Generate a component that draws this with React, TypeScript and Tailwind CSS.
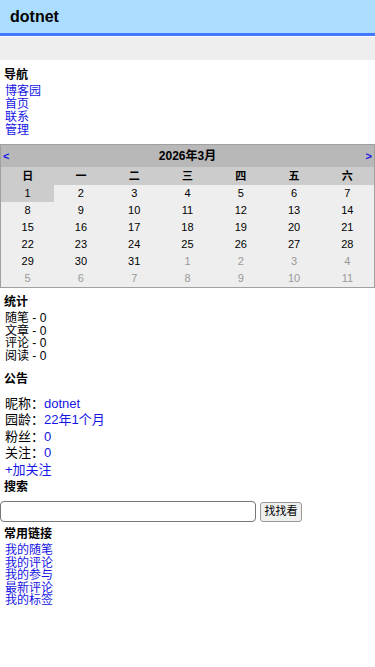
export default function App() {
  const weekdays = ["日", "一", "二", "三", "四", "五", "六"]
  const days: { d: number; other: boolean }[] = []
  for (let i = 1; i <= 31; i++) days.push({ d: i, other: false })
  for (let i = 1; i <= 11; i++) days.push({ d: i, other: true })

  return (
    <div className="min-h-[667px] bg-white text-black font-['Liberation_Sans','Noto_Sans_CJK_SC',sans-serif]">
      <div className="h-[36px] bg-[#aaddff] border-b-[3px] border-[#4477ff] flex items-center px-[10px]">
        <span className="text-[16px] font-bold">dotnet</span>
      </div>
      <div className="mt-px h-[23px] bg-[#eeeeee]"></div>

      <div className="px-[4px] mt-[8px]">
        <h3 className="text-[12px] font-bold leading-[14px]">导航</h3>
        <ul className="mt-[3px] pl-px text-[12px] leading-[13px] text-[#1515e6]">
          <li>博客园</li>
          <li>首页</li>
          <li>联系</li>
          <li>管理</li>
        </ul>
      </div>

      <div className="mt-[7px] border border-[#a0a0a0] text-[11px]">
        <div className="h-[22px] bg-[#b8b8b8] flex items-center justify-between px-[2px]">
          <span className="text-[#1515e6] font-bold">&lt;</span>
          <span className="font-bold text-[12px]">2026年3月</span>
          <span className="text-[#1515e6] font-bold">&gt;</span>
        </div>
        <div className="h-[18px] bg-[#cccccc] grid grid-cols-7 items-center text-center font-bold">
          {weekdays.map((w) => (
            <span key={w}>{w}</span>
          ))}
        </div>
        <div className="grid grid-cols-7 bg-[#eeeeee] text-center">
          {days.map((x, i) => (
            <div
              key={i}
              className={`h-[17px] flex items-center justify-center ${
                i === 0 ? "bg-[#cccccc]" : ""
              } ${x.other ? "text-[#999999]" : "text-black"}`}
            >
              {x.d}
            </div>
          ))}
        </div>
      </div>

      <div className="px-[4px] mt-[7px]">
        <h3 className="text-[12px] font-bold leading-[14px]">统计</h3>
        <ul className="mt-[3px] pl-px text-[12px] leading-[12.7px]">
          <li>随笔 - 0</li>
          <li>文章 - 0</li>
          <li>评论 - 0</li>
          <li>阅读 - 0</li>
        </ul>
      </div>

      <div className="px-[4px] mt-[9px]">
        <h3 className="text-[12px] font-bold leading-[14px]">公告</h3>
        <div className="mt-[10px] pl-px text-[13px] leading-[16.5px]">
          <div>
            昵称：<span className="text-[#1515e6]">dotnet</span>
          </div>
          <div>
            园龄：<span className="text-[#1515e6]">22年1个月</span>
          </div>
          <div>
            粉丝：<span className="text-[#1515e6]">0</span>
          </div>
          <div>
            关注：<span className="text-[#1515e6]">0</span>
          </div>
          <div className="text-[#1515e6]">+加关注</div>
        </div>
      </div>

      <div className="mt-[2px]">
        <h3 className="px-[4px] text-[12px] font-bold leading-[14px]">搜索</h3>
        <div className="mt-[7px] flex items-center gap-[4px]">
          <input className="w-[256px] h-[21px] border border-[#767676] rounded-[4px] bg-white" />
          <button className="w-[42px] h-[20px] bg-[#efefef] border border-[#999999] rounded-[3px] text-[11px] leading-none">
            找找看
          </button>
        </div>
      </div>

      <div className="px-[4px] mt-[5px]">
        <h3 className="text-[12px] font-bold leading-[14px]">常用链接</h3>
        <ul className="mt-[3px] pl-px text-[12px] leading-[12.5px] text-[#1515e6]">
          <li>我的随笔</li>
          <li>我的评论</li>
          <li>我的参与</li>
          <li>最新评论</li>
          <li>我的标签</li>
        </ul>
      </div>
    </div>
  )
}
